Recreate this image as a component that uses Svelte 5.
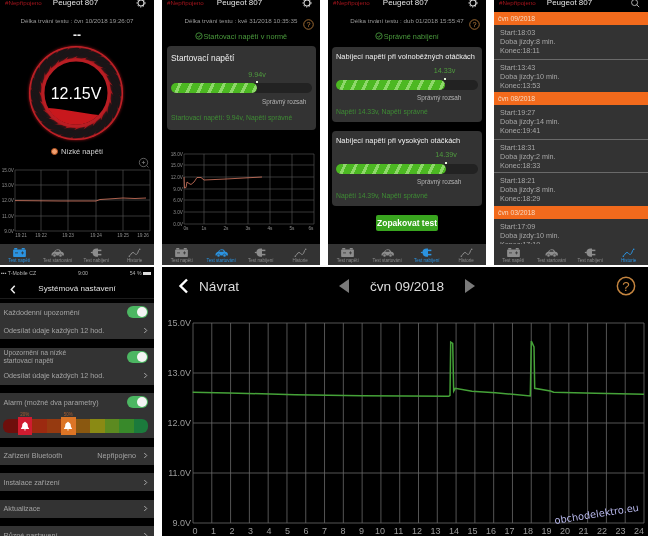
<script lang="ts">
const tabs = ["Test napětí", "Test startování", "Test nabíjení", "Historie"];

const polar = (r: number, deg: number) => {
  const a = (deg * Math.PI) / 180;
  return `${(50 + r * Math.cos(a)).toFixed(1)},${(50 + r * Math.sin(a)).toFixed(1)}`;
};

// twisted blades of the voltage gauge
const blades = Array.from({ length: 24 }, (_, i) => {
  const a = (i * 360) / 24;
  return `M${polar(35, a)} Q${polar(41, a + 4)} ${polar(45, a + 22)} Q${polar(46, a + 33)} ${polar(45, a + 35)} Q${polar(39, a + 22)} ${polar(35, a + 9)} Z`;
});

const overviewChart = {
  w: 154, h: 84,
  xs: [15, 41, 68, 96, 123, 150],
  ys: [12, 27, 42, 58, 73],
  yLabels: ["15.0V", "13.0V", "12.0V", "11.0V", "9.0V"],
  xLabels: ["19:21", "19:22", "19:23", "19:24", "19:25", "19:26"],
  labelXs: [21, 41, 68, 96, 123, 143],
  line: "15,42.6 60,43 96,43 100,41.5 108,41 123,40 135,40.5 146,40",
};

const startChart = {
  w: 158, h: 92,
  xs: [22, 42, 64, 86, 108, 130, 152],
  ys: [6, 17, 29, 41, 52, 64, 76],
  yLabels: ["18.0V", "15.0V", "12.0V", "9.0V", "6.0V", "3.0V", "0.0V"],
  xLabels: ["0s", "1s", "2s", "3s", "4s", "5s", "6s"],
  labelXs: [24, 42, 64, 86, 108, 130, 149],
  line: "22,29 22.5,40 24,39.5 25,34 27,35.5 29,36.5 32,34 35,29.5 39,29.5 42,32 64,31 100,29",
};

const startCard = { title: "Startovací napětí", value: "9.94v", pct: 61, note: "Startovací napětí: 9.94v, Napětí správné" };
const chargeCards = [
  { title: "Nabíjecí napětí při volnoběžných otáčkách", value: "14.33v", pct: 76.5, note: "Napětí 14.33v, Napětí správné" },
  { title: "Nabíjecí napětí při vysokých otáčkách", value: "14.39v", pct: 77.5, note: "Napětí 14.39v, Napětí správné" },
];

const history = [
  { month: "čvn 09/2018", trips: [["18:03", "8", "18:11"], ["13:43", "10", "13:53"]] },
  { month: "čvn 08/2018", trips: [["19:27", "14", "19:41"], ["18:31", "2", "18:33"], ["18:21", "8", "18:29"]] },
  { month: "čvn 03/2018", trips: [["17:09", "10", "17:19"]] },
];

const alarmSegments = [
  { c: "#6e0f0c" }, { c: "#d01c30", bell: "20%" }, { c: "#9c2a10" }, { c: "#963a10" },
  { c: "#dd7526", bell: "50%" }, { c: "#8a5810" }, { c: "#8a8a14" }, { c: "#5c8a20" },
  { c: "#38892a" }, { c: "#1b7a3c" },
];

// month chart, zoom coordinates of the trace converted to the panel
const hours = Array.from({ length: 25 }, (_, i) => i);
const hourX = (h: number) => 31 + (h * 451) / 24;
const hourLabelX = (h: number) => 33 + h * 18.5;
const monthY = [18, 68, 118, 168, 218];
const monthLabels = ["15.0V", "13.0V", "12.0V", "11.0V", "9.0V"];
const monthTrace = [
  [92, 379], [200, 381], [400, 386], [600, 389], [860, 391], [864, 388], [866, 228], [872, 232],
  [875, 375], [880, 367], [930, 376], [1000, 380], [1105, 390], [1108, 225], [1116, 243],
  [1118, 367], [1165, 375], [1175, 379], [1300, 382], [1446, 385],
].map(([x, y]) => `${(x / 3).toFixed(1)},${(y / 3 - 39).toFixed(1)}`).join(" ");
</script>

{#snippet gear()}
  <svg class="gear" viewBox="0 0 12 12">
    <circle cx="6" cy="6" r="3.6" fill="none" stroke="#ddd" stroke-width="1.3" />
    <circle cx="6" cy="6" r="4.8" fill="none" stroke="#ddd" stroke-width="1.2" stroke-dasharray="1.6 1.9" />
  </svg>
{/snippet}

{#snippet header(right: string)}
  <header class="top">
    <span class="conn">#Nepřipojeno</span>
    <span class="car">Peugeot 807</span>
    {#if right === "gear"}
      {@render gear()}
    {:else}
      <svg class="gear" viewBox="0 0 12 12">
        <circle cx="5.5" cy="5.5" r="3.6" fill="none" stroke="#ccc" stroke-width="1" />
        <path d="M8 8l3 3" stroke="#ccc" stroke-width="1" />
      </svg>
    {/if}
  </header>
{/snippet}

{#snippet tabIcon(i: number)}
  <svg class="tab-icon" viewBox="0 0 20 13" fill="currentColor">
    {#if i === 0}
      <rect x="3" y="0.5" width="4" height="2" />
      <rect x="13" y="0.5" width="4" height="2" />
      <rect x="1.5" y="2.5" width="17" height="10" rx="1" />
      <path d="M4 7h4M12 7h4M14 5v4" stroke="#333" stroke-width="1" />
    {:else if i === 1}
      <path d="M2 9c0-2 2-3 3.500-3.500 1-2 3-3.500 5-3.500s3.500 1 4.500 3.500c2 .3 3.500 1.500 3.500 3.500v1.500H2z" />
      <circle cx="6" cy="10.500" r="2" stroke="#333" stroke-width=".7" />
      <circle cx="14" cy="10.500" r="2" stroke="#333" stroke-width=".7" />
      <path d="M7 5.500l1-2h4l1 2z" fill="#333" />
    {:else if i === 2}
      <path d="M10 1a5.500 5.500 0 0 0 0 11h2V1z" />
      <rect x="2.500" y="5.700" width="2.500" height="1.600" />
      <rect x="12" y="2.700" width="4.500" height="2" />
      <rect x="12" y="8.300" width="4.500" height="2" />
    {:else}
      <path d="M3 11.500c2-1 2.500-5 5-5s2 3 4.500 2.500 2-5.500 4.500-7" fill="none" stroke="currentColor" stroke-width="1.300" />
      <circle cx="3" cy="11.500" r="1" />
      <circle cx="17" cy="2" r="1" />
    {/if}
  </svg>
{/snippet}

{#snippet tabbar(active: number)}
  <nav class="tabs">
    {#each tabs as label, i}
      <div class="tab" class:on={i === active}>
        {@render tabIcon(i)}
        <span>{label}</span>
      </div>
    {/each}
  </nav>
{/snippet}

{#snippet help(size: number)}
  <svg class="help" viewBox="0 0 18 18" style="width:{size}px;height:{size}px">
    <circle cx="9" cy="9" r="7.800" fill="none" stroke="#c5853f" stroke-width="1.300" />
    <text x="9" y="13.200" text-anchor="middle" class="help-mark">?</text>
  </svg>
{/snippet}

{#snippet tick()}
  <svg class="tick" viewBox="0 0 10 10">
    <circle cx="5" cy="5" r="4" fill="none" stroke="#58b84a" stroke-width=".9" />
    <path d="M3 5l1.600 1.700L7.200 3.400" fill="none" stroke="#58b84a" stroke-width=".9" />
  </svg>
{/snippet}

{#snippet chart(c: any)}
  <svg class="chart" width={c.w} height={c.h} viewBox="0 0 {c.w} {c.h}">
    {#each c.ys as y, i}
      <line x1={c.xs[0]} x2={c.xs[c.xs.length - 1]} y1={y} y2={y} class="grid" />
      <text x={c.xs[0] - 1} y={y + 1.500} text-anchor="end" class="tiny">{c.yLabels[i]}</text>
    {/each}
    {#each c.xs as x, i}
      <line x1={x} x2={x} y1={c.ys[0]} y2={c.ys[c.ys.length - 1]} class="grid" />
      <text x={c.labelXs[i]} y={c.ys[c.ys.length - 1] + 6} text-anchor="middle" class="tiny">{c.xLabels[i]}</text>
    {/each}
    <polyline points={c.line} class="trace" />
  </svg>
{/snippet}

{#snippet progress(card: any, roomy: boolean)}
  <section class="card" class:roomy>
    <h3>{card.title}</h3>
    <div class="value" style="padding-left:{card.pct}%"><span>{card.value}</span></div>
    <div class="track">
      <div class="fill" style="width:{card.pct}%"></div>
      <i class="marker" style="left:{card.pct}%"></i>
    </div>
    <div class="range">Správný rozsah</div>
    <div class="note">{card.note}</div>
  </section>
{/snippet}

{#snippet toggle()}
  <span class="switch"><i></i></span>
{/snippet}

{#snippet chevron()}
  <svg class="chev" viewBox="0 0 6 8"><path d="M1.500 1l3 3-3 3" fill="none" stroke="#b5b5b5" stroke-width="1.100" /></svg>
{/snippet}

<div class="page">
  <div class="row-top">
    <!-- voltage test -->
    <article class="phone narrow">
      {@render header("gear")}
      <div class="body">
        <div class="meta">Délka trvání testu : čvn 10/2018 19:26:07</div>
        <div class="dashes">--</div>
        <svg class="gauge" viewBox="0 0 100 100" width="100" height="100">
          <defs>
            <radialGradient id="band" cx="50%" cy="50%" r="50%">
              <stop offset="70%" stop-color="#b81e24" />
              <stop offset="85%" stop-color="#861519" />
              <stop offset="93%" stop-color="#520e12" />
              <stop offset="100%" stop-color="#d8262c" />
            </radialGradient>
          </defs>
          <circle cx="50" cy="50" r="47" fill="url(#band)" class="halo" />
          {#each blades as d}
            <path {d} fill="#1a1517" />
          {/each}
          <circle cx="50" cy="50" r="33" fill="#000" stroke="#b81e24" stroke-width="3" class="halo" />
          <path d="M22 65 C38 66 56 70 72.500 72 A31.500 31.500 0 0 1 22 65Z" fill="#c8181d" />
          <text x="50" y="55.500" text-anchor="middle" class="reading">12.15V</text>
        </svg>
        <div class="state"><i class="dot"></i>Nízké napětí</div>
        <div class="chart-wrap">
          {@render chart(overviewChart)}
          <svg class="zoom-btn" viewBox="0 0 10 10">
            <circle cx="5" cy="5" r="3.800" fill="none" stroke="#777" stroke-width=".7" />
            <path d="M3.500 5h3M5 3.500v3M7.800 7.800l1.700 1.700" stroke="#777" stroke-width=".7" />
          </svg>
        </div>
      </div>
      {@render tabbar(0)}
    </article>

    <!-- start test -->
    <article class="phone wide">
      {@render header("gear")}
      <div class="body">
        <div class="help-spot">{@render help(11)}</div>
        <div class="meta">Délka trvání testu : kvě 31/2018 10:35:35</div>
        <div class="ok">{@render tick()}Startovací napětí v normě</div>
        {@render progress(startCard, true)}
        <div class="start-chart">{@render chart(startChart)}</div>
      </div>
      {@render tabbar(1)}
    </article>

    <!-- charging test -->
    <article class="phone wide">
      {@render header("gear")}
      <div class="body">
        <div class="help-spot">{@render help(11)}</div>
        <div class="meta">Délka trvání testu : dub 01/2018 15:55:47</div>
        <div class="ok">{@render tick()}Správné nabíjení</div>
        <div class="charge-cards">
          {#each chargeCards as card}
            {@render progress(card, false)}
          {/each}
        </div>
        <button class="again">Zopakovat test</button>
      </div>
      {@render tabbar(2)}
    </article>

    <!-- history -->
    <article class="phone narrow">
      {@render header("search")}
      <div class="body list">
        {#each history as group}
          <div class="band">{group.month}</div>
          {#each group.trips as trip, i}
            <div class="trip" class:sep={i > 0}>
              <div>Start:{trip[0]}</div>
              <div>Doba jízdy:{trip[1]} min.</div>
              <div>Konec:{trip[2]}</div>
            </div>
          {/each}
        {/each}
      </div>
      {@render tabbar(3)}
    </article>
  </div>

  <div class="row-bottom">
    <!-- settings -->
    <article class="phone narrow settings">
      <div class="status">
        <span>▪▪▪ T-Mobile CZ</span>
        <span>9:00</span>
        <span class="batt">54 % <i></i></span>
      </div>
      <div class="set-nav">
        <svg class="back-small" viewBox="0 0 7 12"><path d="M5.500 1.500L1.500 6l4 4.500" fill="none" stroke="#eee" stroke-width="1.700" /></svg>
        <span>Systémová nastavení</span>
      </div>
      <div class="groups">
        <div class="group">
          <div class="set-row"><span>Každodenní upozornění</span>{@render toggle()}</div>
          <div class="set-row"><span>Odesílat údaje každých 12 hod.</span>{@render chevron()}</div>
        </div>
        <div class="group">
          <div class="set-row tall"><span>Upozornění na nízké<br />startovací napětí</span>{@render toggle()}</div>
          <div class="set-row"><span>Odesílat údaje každých 12 hod.</span>{@render chevron()}</div>
        </div>
        <div class="group alarm">
          <div class="set-row"><span>Alarm (možné dva parametry)</span>{@render toggle()}</div>
          <div class="scale">
            {#each alarmSegments as seg}
              <div class="seg" class:bell={seg.bell} style="background:{seg.c}">
                {#if seg.bell}
                  <em>{seg.bell}</em>
                  <svg viewBox="0 0 10 10"><path d="M5 .8c.5 0 .8.3.8.8 1.500.4 2 1.700 2 3.200 0 1.300.6 1.900 1.200 2.600v.6H1v-.6c.6-.7 1.200-1.300 1.200-2.600 0-1.500.5-2.800 2-3.200 0-.5.300-.8.800-.8zM4 8.600h2a1 1 0 0 1-2 0z" fill="#fff" /></svg>
                {/if}
              </div>
            {/each}
          </div>
        </div>
        <div class="group"><div class="set-row"><span>Zařízení Bluetooth</span><span class="push">Nepřipojeno</span>{@render chevron()}</div></div>
        <div class="group"><div class="set-row"><span>Instalace zařízení</span>{@render chevron()}</div></div>
        <div class="group"><div class="set-row"><span>Aktualizace</span>{@render chevron()}</div></div>
        <div class="group"><div class="set-row"><span>Různé nastavení</span>{@render chevron()}</div></div>
      </div>
    </article>

    <!-- month detail -->
    <article class="detail">
      <div class="detail-head">
        <div class="back">
          <svg viewBox="0 0 11 16"><path d="M9 1.500L2.500 8 9 14.500" fill="none" stroke="#fff" stroke-width="2.400" /></svg>
          <span>Návrat</span>
        </div>
        <div class="month">
          <svg viewBox="0 0 10 14"><path d="M10 0v14L0 7z" fill="#7a7a7a" /></svg>
          <span>čvn 09/2018</span>
          <svg viewBox="0 0 10 14"><path d="M0 0v14l10-7z" fill="#7a7a7a" /></svg>
        </div>
        <div class="detail-help">{@render help(20)}</div>
      </div>
      <svg class="month-chart" width="486" height="231" viewBox="0 0 486 231">
        {#each monthY as y, i}
          <line x1="31" x2="482" y1={y} y2={y} class="grid big" />
          <text x="29" y={y + 3} text-anchor="end" class="axis">{monthLabels[i]}</text>
        {/each}
        {#each hours as h}
          <line x1={hourX(h)} x2={hourX(h)} y1="18" y2="218" class="grid big" />
          <text x={hourLabelX(h)} y="228.500" text-anchor="middle" class="axis">{h}</text>
        {/each}
        <polyline points={monthTrace} class="trace-green" />
        <text class="mark" transform="translate(393 219) rotate(-9)">obchodelektro.eu</text>
      </svg>
    </article>
  </div>
</div>

<style>
  :global(body) {
    background: #fff;
    font-family: "Liberation Sans", Arial, sans-serif;
  }

  .page {
    width: 648px;
    height: 536px;
    overflow: hidden;
    display: flex;
    flex-direction: column;
    gap: 2px;
    background: #fff;
  }

  .row-top,
  .row-bottom {
    display: flex;
    justify-content: space-between;
  }
  .row-top { height: 265px; }
  .row-bottom { height: 269px; }

  .phone {
    display: flex;
    flex-direction: column;
    background: #000;
    color: #ccc;
    overflow: hidden;
    filter: blur(0.45px);
  }
  .narrow { width: 154px; }
  .wide { width: 158px; }

  .top {
    flex: 0 0 12px;
    display: grid;
    grid-template-columns: 1fr auto 1fr;
    align-items: start;
    padding: 0 8px 0 5px;
    overflow: hidden;
    line-height: 10px;
    white-space: nowrap;
  }
  .conn { color: #a3141c; font-size: 6.200px; margin-top: -2px; }
  .car { color: #e4e4e4; font-size: 8px; margin-top: -2px; }
  .gear { width: 10px; height: 10px; margin-top: -2px; justify-self: end; }

  .body {
    flex: 1;
    min-height: 0;
    position: relative;
    overflow: hidden;
  }

  .meta {
    margin-top: 5px;
    height: 8px;
    line-height: 8px;
    font-size: 6.200px;
    text-align: center;
    color: #9a9a9a;
    white-space: nowrap;
  }

  .dashes {
    margin-top: 5px;
    height: 10px;
    line-height: 10px;
    text-align: center;
    font-size: 12px;
    font-weight: 700;
    color: #eee;
  }

  .gauge {
    display: block;
    margin: 3px 0 0 26px;
    overflow: visible;
  }
  .halo { filter: drop-shadow(0 0 1.500px #a81218); }
  .reading {
    font-size: 16px;
    fill: #fff;
    font-family: "Liberation Sans", Arial, sans-serif;
  }

  .state {
    margin-top: 3px;
    height: 10px;
    display: flex;
    align-items: center;
    justify-content: center;
    gap: 3px;
    font-size: 7.500px;
    color: #d0d0d0;
  }
  .dot {
    width: 5px;
    height: 5px;
    border-radius: 50%;
    background: #f0a070;
    border: 1.500px solid #b5521f;
  }

  .chart-wrap {
    position: relative;
    margin-top: 2px;
  }
  .chart { display: block; }
  .zoom-btn {
    position: absolute;
    right: 5px;
    top: -1px;
    width: 11px;
    height: 11px;
  }

  .grid {
    stroke: #5c5c5c;
    stroke-width: 0.6;
  }
  .grid.big {
    stroke: #6a6a6a;
    stroke-width: 0.8;
  }
  .tiny {
    font-size: 4.700px;
    fill: #8e8e8e;
    font-family: "Liberation Sans", Arial, sans-serif;
  }
  .trace {
    fill: none;
    stroke: #d97a62;
    stroke-width: 0.8;
  }

  .tabs {
    flex: 0 0 21px;
    display: flex;
    background: #333;
  }
  .tab {
    flex: 1;
    display: flex;
    flex-direction: column;
    align-items: center;
    color: #8d8d8d;
    padding-top: 3px;
  }
  .tab.on { color: #2b93e0; }
  .tab-icon {
    width: 15px;
    height: 11px;
  }
  .tab span {
    font-size: 4.500px;
    line-height: 5px;
    white-space: nowrap;
  }

  .help-spot {
    position: absolute;
    right: 6px;
    top: 7px;
    line-height: 0;
  }
  .help-mark {
    font-size: 12px;
    fill: #c5853f;
    font-family: "Liberation Sans", Arial, sans-serif;
  }

  .ok {
    margin-top: 6px;
    height: 10px;
    display: flex;
    align-items: center;
    justify-content: center;
    font-size: 7.300px;
    color: #4a9a3c;
    white-space: nowrap;
  }
  .tick {
    width: 8px;
    height: 8px;
    margin-right: 0.500px;
  }

  .card {
    margin: 0 4px;
    height: 75px;
    padding: 4px 4px 0;
    border-radius: 4px;
    background: #333;
    box-sizing: border-box;
  }
  .card h3 {
    margin: 0;
    height: 12px;
    line-height: 12px;
    font-size: 7.400px;
    font-weight: 400;
    color: #f0f0f0;
    white-space: nowrap;
  }
  .value {
    margin-top: 4px;
    height: 8px;
    line-height: 8px;
    font-size: 7.200px;
    color: #4f9c3e;
  }
  .value span {
    display: inline-block;
    transform: translateX(-50%);
  }
  .track {
    position: relative;
    margin-top: 5px;
    height: 10px;
    border-radius: 5px;
    background: #222;
  }
  .fill {
    height: 100%;
    border-radius: 5px;
    background: repeating-linear-gradient(115deg, #4cb822 0 7px, #8ed86a 7px 10px);
  }
  .marker {
    position: absolute;
    top: -2px;
    width: 2px;
    height: 2px;
    margin-left: -1px;
    background: #e4f4da;
  }
  .range {
    margin-top: 4px;
    height: 8px;
    line-height: 8px;
    font-size: 6.400px;
    color: #b4b4b4;
    padding-left: 81px;
    white-space: nowrap;
  }
  .note {
    margin-top: 6px;
    height: 8px;
    line-height: 8px;
    font-size: 6.800px;
    color: #3e8c34;
    white-space: nowrap;
  }

  .card.roomy {
    margin: 5px 4px 0 5px;
    height: 84px;
    padding-top: 6px;
  }
  .card.roomy h3 { font-size: 8.400px; }
  .card.roomy .value { margin-top: 7px; }
  .card.roomy .track { margin-top: 4px; }
  .card.roomy .range { margin-top: 5px; padding-left: 91px; }
  .card.roomy .note { margin-top: 8px; }

  .start-chart { margin-top: 18px; }

  .charge-cards {
    margin-top: 6px;
    display: flex;
    flex-direction: column;
    gap: 9px;
  }

  .again {
    display: block;
    margin: 9px auto 0;
    width: 62px;
    height: 16px;
    padding: 0;
    border: 0;
    border-radius: 2px;
    background: #39a51f;
    color: #fff;
    font: 700 8.500px "Liberation Sans", Arial, sans-serif;
    white-space: nowrap;
  }

  .list { background: #333; }
  .band {
    height: 13px;
    line-height: 13px;
    padding-left: 4px;
    background: #f26a1c;
    color: #f6d8c0;
    font-size: 6.800px;
  }
  .trip {
    height: 33.500px;
    box-sizing: border-box;
    padding: 3px 0 0 6px;
    font-size: 7.200px;
    line-height: 9px;
    color: #a8a8a8;
  }
  .trip.sep { border-top: 1px solid #6a6a6a; }

  .settings { color: #a4a4a4; }
  .status {
    flex: 0 0 12px;
    display: flex;
    align-items: center;
    justify-content: space-between;
    padding: 0 3px 0 1px;
    font-size: 5.200px;
    color: #b0b0b0;
  }
  .batt i {
    display: inline-block;
    width: 8px;
    height: 3.500px;
    background: #ddd;
    vertical-align: middle;
  }
  .set-nav {
    position: relative;
    flex: 0 0 20px;
    display: flex;
    align-items: center;
    justify-content: center;
    font-size: 8.100px;
    color: #e0e0e0;
    border-bottom: 1px solid #1c1c1c;
    box-sizing: border-box;
  }
  .back-small {
    position: absolute;
    left: 10px;
    top: 5px;
    width: 6px;
    height: 11px;
  }

  .groups {
    margin-top: 4px;
    display: flex;
    flex-direction: column;
    gap: 8.500px;
  }
  .group { background: #333; }
  .set-row {
    height: 18px;
    display: flex;
    align-items: center;
    justify-content: space-between;
    padding: 0 6px 0 3.500px;
    font-size: 7.200px;
    white-space: nowrap;
  }
  .set-row.tall {
    height: 19px;
    line-height: 8px;
    font-size: 6.800px;
    align-items: center;
  }
  .push { margin-left: auto; margin-right: 7px; }
  .chev { width: 5px; height: 7px; }

  .switch {
    width: 21px;
    height: 12px;
    border-radius: 6px;
    background: #4cb662;
    display: flex;
    justify-content: flex-end;
    padding: 1px;
    box-sizing: border-box;
  }
  .switch i {
    width: 10px;
    height: 10px;
    border-radius: 50%;
    background: #f4f4f4;
  }

  .alarm { padding-bottom: 5px; }
  .scale {
    margin: 8px 6px 0 3px;
    display: flex;
    height: 14px;
  }
  .seg {
    position: relative;
    flex: 1;
  }
  .seg:first-child { border-radius: 6px 0 0 6px; }
  .seg:last-child { border-radius: 0 6px 6px 0; }
  .seg.bell {
    margin: -2px 0;
    display: flex;
    align-items: center;
    justify-content: center;
  }
  .seg svg { width: 10px; height: 10px; }
  .seg em {
    position: absolute;
    top: -4px;
    left: 0;
    right: 0;
    text-align: center;
    font-size: 4.500px;
    font-style: normal;
    line-height: 4px;
    color: #a85c30;
  }

  .detail {
    width: 486px;
    background: #000;
    color: #dcdcdc;
    overflow: hidden;
    filter: blur(0.3px);
  }
  .detail-head {
    height: 38px;
    display: grid;
    grid-template-columns: 1fr auto 1fr;
    align-items: center;
    padding: 0 12px 0 16px;
    font-size: 13.600px;
  }
  .back {
    display: flex;
    align-items: center;
    gap: 10px;
  }
  .back svg { width: 11px; height: 16px; }
  .month {
    display: flex;
    align-items: center;
    gap: 21px;
  }
  .month svg { width: 10px; height: 14px; }
  .detail-help {
    justify-self: end;
    line-height: 0;
  }

  .month-chart { display: block; }
  .axis {
    font-size: 9px;
    fill: #9c9c9c;
    font-family: "Liberation Sans", Arial, sans-serif;
  }
  .trace-green {
    fill: none;
    stroke: #45a238;
    stroke-width: 1.500;
  }
  .mark {
    font-size: 9.800px;
    fill: #b9b9ee;
    font-family: "DejaVu Sans", sans-serif;
  }
</style>
